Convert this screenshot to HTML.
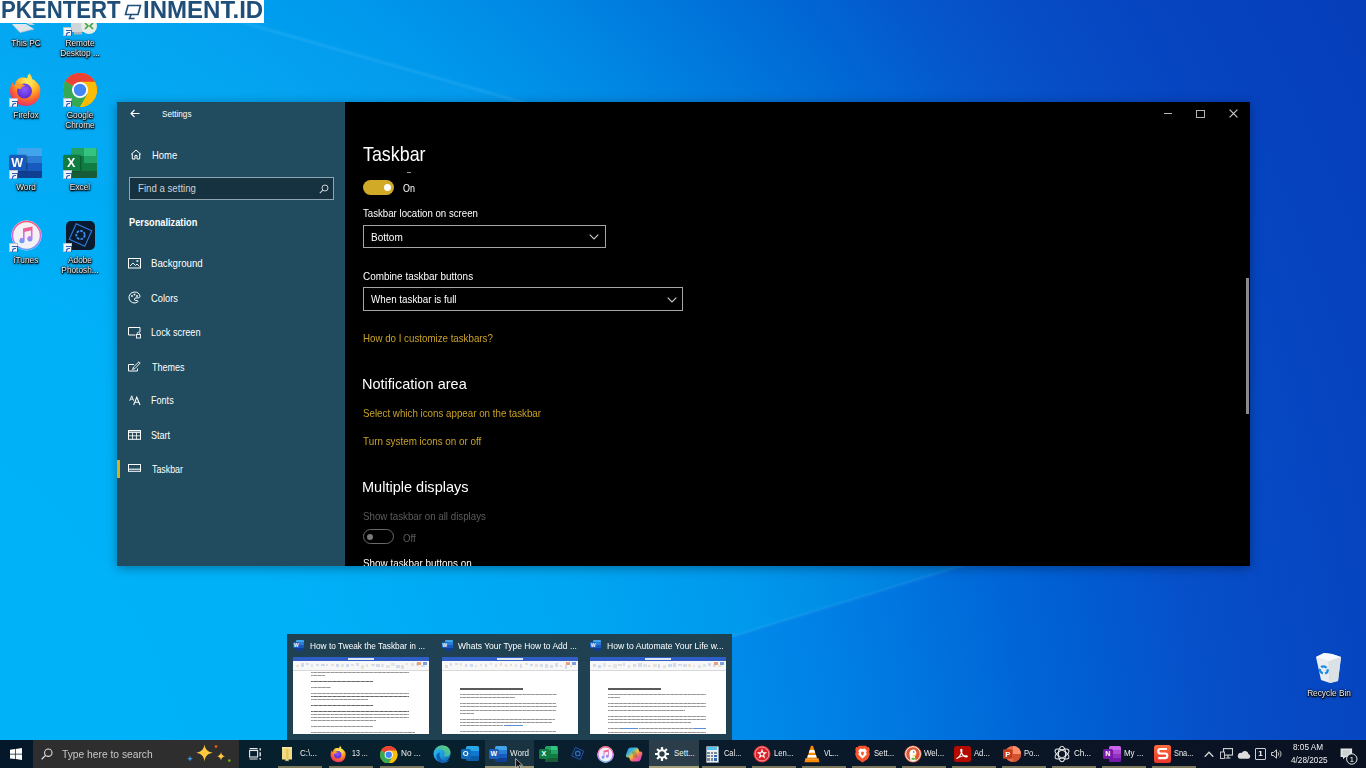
<!DOCTYPE html>
<html>
<head>
<meta charset="utf-8">
<title>Taskbar settings</title>
<style>
*{box-sizing:border-box;margin:0;padding:0}
html,body{width:1366px;height:768px;overflow:hidden}
body{position:relative;font-family:"Liberation Sans",sans-serif;color:#fff;
 background:#0078d7;}
.abs{position:absolute}
#root{position:absolute;left:-8px;top:-8px;width:1382px;height:784px;overflow:hidden;filter:blur(.55px)}
#stage{position:absolute;left:8px;top:8px;width:1366px;height:768px}
#bg{position:absolute;left:-8px;top:-8px;width:1382px;height:784px;
 background:radial-gradient(circle at -292px 868px,#00b5f9 0px,#00b1f8 626px,#00a5f1 927px,#00a0f0 982px,#0098ec 1082px,#0088e4 1195px,#0080e0 1240px,#0068d4 1382px,#0654ca 1503px,#064ac4 1600px,#0644c0 1686px,#063eba 1853px);}
#bg2{position:absolute;left:0;top:0;width:1366px;height:768px}

/* watermark */
#wm{left:0;top:0;width:264px;height:23px;background:#fff;color:#1f4e79;font-weight:bold;font-size:23px;line-height:23px;white-space:nowrap}

/* settings window */
#win{left:117px;top:102px;width:1133px;height:464px;background:#000;box-shadow:0 2px 10px rgba(0,0,0,.35);overflow:hidden}
#side{left:0;top:0;width:228px;height:464px;background:#214b5e}
.t{position:absolute;white-space:nowrap;line-height:1;transform-origin:0 50%}
.nav{font-size:10.5px;color:#fff}
.gold{color:#c9a227}
.lbl{font-size:10.5px}
.h2{font-size:15px}
.dd{position:absolute;border:1.200px solid #a6a6a6;background:#000;height:23.500px}

/* thumbnails */
#thumbs{left:287px;top:634px;width:445px;height:107px;background:#1f4152}
.th{position:absolute;top:23px;width:136px;height:76.500px;background:#fff;overflow:hidden}
.tt{position:absolute;top:6.700px;font-size:9px;white-space:nowrap;line-height:11px}

/* taskbar */
#tb{left:0;top:740px;width:1366px;height:28px;background:linear-gradient(90deg,#06202e 0,#08202e 500px,#0a1a2a 800px,#0a1424 1100px,#0a1222 1366px)}
.tbt{position:absolute;top:8px;font-size:9px;line-height:11px;white-space:nowrap;color:#f0f0f0}
.ul{position:absolute;top:26px;height:2px;background:#7c775a}
</style>
</head>
<body>
<div id="root"><div id="stage">
<div class="abs" style="left:-8px;top:-8px;width:280px;height:31px;background:#fff"></div>
<div id="bg"></div>
<svg id="bg2" width="1366" height="768" viewBox="0 0 1366 768"><defs><linearGradient id="wdg" gradientUnits="userSpaceOnUse" x1="600" y1="0" x2="1330" y2="0"><stop offset="0" stop-color="#001ed2" stop-opacity=".13"/><stop offset=".6" stop-color="#001ed2" stop-opacity=".13"/><stop offset="1" stop-color="#001ed2" stop-opacity="0"/></linearGradient><filter id="bl"><feGaussianBlur stdDeviation="1.2"/></filter></defs>
<path d="M0 -47L560 113" stroke="#8fd8ff" stroke-opacity=".16" stroke-width="2.500" filter="url(#bl)"/>
<path d="M0 -47L560 113L0 200z" fill="#7fd0ff" fill-opacity=".035"/>
<path d="M560 690L1160 505" stroke="#8fd0ff" stroke-opacity=".12" stroke-width="2.500" filter="url(#bl)"/>
<path d="M470 718L1160 505L1366 441V768H470z" fill="url(#wdg)"/>
</svg>

<!-- WATERMARK -->
<div id="wm" class="abs"><span id="wm1" style="position:absolute;left:.8px;top:-.7px;transform-origin:0 50%;transform:scaleX(.965)">PKENTERT</span><span id="wm2" style="position:absolute;left:142.500px;top:-.7px;transform-origin:0 50%;transform:scaleX(1.045)">INMENT.ID</span>
<svg style="position:absolute;left:124px;top:4px" width="18" height="16" viewBox="0 0 18 16"><path d="M4 1.5h12.5l-2.5 9H1.5z" fill="none" stroke="#1f4e79" stroke-width="1.6"/><path d="M7 11l-1.5 3.5h5" fill="none" stroke="#1f4e79" stroke-width="1.6"/></svg>
</div>

<!-- DESKTOP ICONS -->
<div id="icons">
<style>
.dl{position:absolute;font-size:9px;line-height:10.300px;color:#f2f2f2;text-align:center;width:60px;white-space:nowrap;text-shadow:0 0 1px #000,0 .8px 1.200px #000,.6px .8px 1.500px #000,0 0 2.500px rgba(0,0,0,.95),0 1px 3px rgba(0,0,0,.8);transform:scaleX(.92)}
.sc{position:absolute;width:9px;height:9px;background:#f1f4f7;border:.5px solid #b8c2cc}
.sc:after{content:"";position:absolute;left:2px;top:2px;width:4.500px;height:4.500px;border-top:1.600px solid #2a5db8;border-right:1.600px solid #2a5db8;border-top-right-radius:1px}
.sc:before{content:"";position:absolute;left:1.500px;top:4.200px;width:3px;height:3px;border-left:1.400px solid #2a5db8;border-top:1.400px solid #2a5db8;border-top-left-radius:3px}
</style>
<!-- This PC (cut off) -->
<svg class="abs" style="left:10px;top:23px" width="26" height="11" viewBox="0 0 26 11"><path d="M2 1l14 0 8 5-14 3.500z" fill="#dfe6ea"/><path d="M2 1l8 8.500L24 6" fill="none" stroke="#b9c4cb" stroke-width=".8"/><path d="M16 0l6-0 3 2-5 0z" fill="#c8d2d8"/></svg>
<div class="dl" style="left:-4.500px;top:37.500px">This PC</div>
<!-- Remote Desktop (cut off) -->
<svg class="abs" style="left:62px;top:23px" width="36" height="14" viewBox="0 0 36 14"><rect x="9" y="0" width="14" height="9" fill="#cfd6da"/><rect x="12" y="9" width="8" height="2.500" fill="#aab4ba"/><circle cx="27" cy="3" r="8" fill="#e8ece8"/><path d="M23 0l3 3-3 3M31 0l-3 3 3 3" stroke="#3da53d" stroke-width="1.600" fill="none"/></svg>
<div class="sc" style="left:63px;top:27px"></div>
<div class="dl" style="left:50px;top:37.500px">Remote<br>Desktop ...</div>

<!-- Firefox -->
<svg class="abs" style="left:9px;top:72px" width="34" height="35" viewBox="0 0 34 35">
 <defs><radialGradient id="ffg" cx="60%" cy="25%" r="85%"><stop offset="0" stop-color="#fff36b"/><stop offset=".35" stop-color="#ffbd2e"/><stop offset=".65" stop-color="#ff6a2a"/><stop offset="1" stop-color="#e31587"/></radialGradient>
 <radialGradient id="ffp" cx="50%" cy="40%" r="60%"><stop offset="0" stop-color="#9059ff"/><stop offset="1" stop-color="#5b2bd0"/></radialGradient></defs>
 <path d="M20 1c2 2 3 4 3 6 3 1 6 4 8 8 1 4 0 10-3 14-4 5-11 6-17 4C5 31 1 26 1 19c0-4 1-7 3-9 0 2 1 3 2 3 0-3 2-6 5-7 3-1 7 0 9 1z" fill="url(#ffg)"/>
 <circle cx="15.500" cy="19" r="7.500" fill="url(#ffp)"/>
 <path d="M5 14c3-3 8-3 11 0-2 0-4 1-4 3-3 0-5-1-7-3z" fill="#ff9a2e"/>
 <path d="M19 2c3 3 5 8 3 13-1-3-3-5-5-6 1-2 2-5 2-7z" fill="#ffe14a"/>
</svg>
<div class="sc" style="left:9px;top:98px"></div>
<div class="dl" style="left:-4.500px;top:110px">Firefox</div>

<!-- Chrome -->
<svg class="abs" style="left:62.500px;top:73px" width="34" height="34" viewBox="0 0 34 34">
 <circle cx="17" cy="17" r="17" fill="#fbbc05"/>
 <path d="M17 17L2.280 8.500A17 17 0 0 1 31.720 8.500z" fill="#ea4335"/>
 <path d="M17 17H34A17 17 0 0 0 31.720 8.500L17 8.500z" fill="#ea4335"/>
 <path d="M17 17L2.280 8.500A17 17 0 0 0 17 34L24.500 21z" fill="#34a853"/>
 <path d="M17 17l7.500 4L17 34A17 17 0 0 0 31.720 8.500H17z" fill="#fbbc05"/>
 <path d="M2.280 8.500A17 17 0 0 1 31.720 8.500H17z" fill="#ea4335"/>
 <circle cx="17" cy="17" r="8" fill="#fff"/><circle cx="17" cy="17" r="6.200" fill="#4285f4"/>
</svg>
<div class="sc" style="left:63px;top:98px"></div>
<div class="dl" style="left:50px;top:110px">Google<br>Chrome</div>

<!-- Word -->
<div class="abs" style="left:17px;top:148px;width:25px;height:30px;border-radius:1.500px;overflow:hidden">
 <div style="height:7.500px;background:#41a5ee"></div><div style="height:7.500px;background:#2b7cd3"></div><div style="height:7.500px;background:#185abd"></div><div style="height:7.500px;background:#103f91"></div></div>
<div class="abs" style="left:9px;top:154.500px;width:16.500px;height:16.500px;background:#185abd;border-radius:1.500px;box-shadow:1px 0 2px rgba(0,0,0,.35);color:#fff;font-weight:bold;font-size:12.500px;line-height:16.500px;text-align:center">W</div>
<div class="sc" style="left:9px;top:170px"></div>
<div class="dl" style="left:-4.500px;top:182px">Word</div>

<!-- Excel -->
<div class="abs" style="left:71px;top:148px;width:25.500px;height:30px;border-radius:1.500px;overflow:hidden;background:#21a366">
 <div class="abs" style="left:12.700px;top:0;width:12.800px;height:7.500px;background:#33c481"></div>
 <div class="abs" style="left:0;top:7.500px;width:12.700px;height:7.500px;background:#107c41"></div>
 <div class="abs" style="left:12.700px;top:7.500px;width:12.800px;height:7.500px;background:#21a366"></div>
 <div class="abs" style="left:0;top:15px;width:25.500px;height:7.500px;background:#107c41"></div>
 <div class="abs" style="left:0;top:22.500px;width:25.500px;height:7.500px;background:#185c37"></div></div>
<div class="abs" style="left:63px;top:154.500px;width:16.500px;height:16.500px;background:#107c41;border-radius:1.500px;box-shadow:1px 0 2px rgba(0,0,0,.35);color:#fff;font-weight:bold;font-size:12.500px;line-height:16.500px;text-align:center">X</div>
<div class="sc" style="left:63px;top:170px"></div>
<div class="dl" style="left:50px;top:182px">Excel</div>

<!-- iTunes -->
<svg class="abs" style="left:10.500px;top:219.500px" width="31" height="31" viewBox="0 0 31 31">
 <defs><linearGradient id="itg" x1="0" y1="0" x2="0" y2="1"><stop offset="0" stop-color="#fb5c74"/><stop offset=".55" stop-color="#d36ee8"/><stop offset="1" stop-color="#5aa6f8"/></linearGradient></defs>
 <circle cx="15.500" cy="15.500" r="15" fill="#f4f1f6"/><circle cx="15.500" cy="15.500" r="14" fill="none" stroke="url(#itg)" stroke-width="1.600"/>
 <path d="M12 8.500l9.500-2v12.300a2.600 2.600 0 1 1-1.600-2.400V10.500l-6.300 1.400v8.700a2.600 2.600 0 1 1-1.600-2.400z" fill="url(#itg)"/>
</svg>
<div class="sc" style="left:9px;top:243px"></div>
<div class="dl" style="left:-4.500px;top:254.500px">iTunes</div>

<!-- Photoshop Elements -->
<div class="abs" style="left:65.500px;top:221px;width:29px;height:28.500px;border-radius:5px;background:#0a1b30"></div>
<svg class="abs" style="left:65.500px;top:221px" width="29" height="29" viewBox="0 0 29 29"><rect x="6" y="5.500" width="17" height="17" fill="none" stroke="#2f7de0" stroke-width="1.100" transform="rotate(24 14.500 14)"/><circle cx="14.500" cy="14" r="4.200" fill="none" stroke="#3f95f5" stroke-width="1.800" stroke-dasharray="2.600 1.200"/></svg>
<div class="sc" style="left:63px;top:243px"></div>
<div class="dl" style="left:50px;top:254.500px">Adobe<br>Photosh...</div>

<!-- Recycle bin -->
<svg class="abs" style="left:1314px;top:651px" width="29" height="33" viewBox="0 0 29 33"><path d="M2 6l8-4 8 1 9 3-3 24-8 2-9-3z" fill="#e9edf0"/><path d="M2 6l13 4 12-4-9-3-8-1z" fill="#f8fafb"/><path d="M15 10l1 22" stroke="#c9d1d6" stroke-width=".8"/><path d="M15 10l12-4-3 24-8 2z" fill="#dbe1e5"/><circle cx="9.300" cy="17.800" r="3.700" fill="none" stroke="#1b8ae6" stroke-width="2.300" stroke-dasharray="5.600 2.150" transform="rotate(-20 9.300 17.800) skewY(8)"/></svg>
<div class="dl" style="left:1298.500px;top:688px">Recycle Bin</div>
</div>

<!-- SETTINGS WINDOW -->
<div id="win" class="abs">
 <div id="side" class="abs">
  <!-- back arrow -->
  <svg class="abs" style="left:12.800px;top:7.200px" width="10" height="9" viewBox="0 0 10 9"><path d="M9.5 4.5H1M4.5 1L1 4.5 4.5 8" fill="none" stroke="#fff" stroke-width="1.1"/></svg>
  <div class="t" id="s_settings" style="left:44.500px;top:7.300px;font-size:9.5px;transform:scaleX(0.859)">Settings</div>
  <!-- home -->
  <svg class="abs" style="left:12.500px;top:47px" width="12" height="11" viewBox="0 0 12 11"><path d="M1 5.5L6 1l5 4.500M2.300 4.800V10h2.700V6.500h2V10h2.700V4.800" fill="none" stroke="#fff" stroke-width="1"/></svg>
  <div class="t nav" id="s_home" style="left:35px;top:48px;font-size:11px;transform:scaleX(0.857)">Home</div>
  <!-- search -->
  <div class="abs" style="left:11.500px;top:74.700px;width:205.500px;height:23px;border:1px solid #8fa6b2;background:#163240"></div>
  <div class="t" id="s_find" style="left:21px;top:81px;font-size:10.5px;color:#c9d2d7;transform:scaleX(.92)">Find a setting</div>
  <svg class="abs" style="left:202px;top:82px" width="10" height="10" viewBox="0 0 10 10"><circle cx="6" cy="4" r="3" fill="none" stroke="#c9d2d7" stroke-width="1"/><path d="M3.800 6.200L.8 9.200" stroke="#c9d2d7" stroke-width="1.1"/></svg>
  <div class="t" id="s_pers" style="left:12px;top:115px;font-size:10.5px;font-weight:bold;transform:scaleX(.88)">Personalization</div>

  <!-- nav items -->
  <svg class="abs" style="left:10.700px;top:155.500px" width="13" height="11" viewBox="0 0 13 11"><rect x=".5" y=".5" width="12" height="9.500" fill="none" stroke="#fff"/><path d="M2 8l3-3 2.500 2.500L9 6l2.500 2.500" fill="none" stroke="#fff" stroke-width=".9"/><rect x="8.500" y="2.200" width="1.800" height="1.600" fill="#fff"/></svg>
  <div class="t nav" id="n1" style="left:34px;top:156px;transform:scaleX(0.923)">Background</div>

  <svg class="abs" style="left:10.700px;top:188.500px" width="13" height="13" viewBox="0 0 13 13"><path d="M6.500 1a5.500 5.500 0 1 0 3 10.100c.9-.6.300-1.600-.5-1.600H7.800a1.300 1.300 0 0 1 0-2.600h2.400c1 0 1.800-.7 1.800-1.700A5.500 5.500 0 0 0 6.500 1z" fill="none" stroke="#fff" stroke-width="1"/><circle cx="4" cy="5" r=".9" fill="#fff"/><circle cx="6.500" cy="3.500" r=".9" fill="#fff"/><circle cx="9" cy="5" r=".9" fill="#fff"/></svg>
  <div class="t nav" id="n2" style="left:34px;top:191px;transform:scaleX(0.887)">Colors</div>

  <svg class="abs" style="left:10.700px;top:224.500px" width="13" height="12" viewBox="0 0 13 12"><path d="M7.500 8H.5V.5h11.500V5" fill="none" stroke="#fff"/><rect x="8.500" y="7.500" width="4" height="3.500" fill="none" stroke="#fff" stroke-width=".9"/><path d="M9.300 7.500V6.300a1.200 1.200 0 0 1 2.400 0v1.200" fill="none" stroke="#fff" stroke-width=".9"/></svg>
  <div class="t nav" id="n3" style="left:34px;top:225px;transform:scaleX(0.875)">Lock screen</div>

  <svg class="abs" style="left:10.700px;top:258.800px" width="13" height="12" viewBox="0 0 13 12"><path d="M6 3.500H.5V10h9V7.500" fill="none" stroke="#fff"/><path d="M4.500 8.500l1-2.500L11 .8l1.200 1.200L7 7.500z" fill="none" stroke="#fff" stroke-width=".9"/></svg>
  <div class="t nav" id="n4" style="left:35px;top:260px;transform:scaleX(0.858)">Themes</div>

  <svg class="abs" style="left:11.500px;top:293px" width="12" height="11" viewBox="0 0 12 11"><path d="M.7 5.800L2.700.8l2 5M1.400 4.100h2.600" fill="none" stroke="#fff" stroke-width=".9"/><path d="M4.600 10L7.800 2.200 11 10M5.800 7.300h4" fill="none" stroke="#fff" stroke-width="1.050"/></svg>
  <div class="t nav" id="n5" style="left:34px;top:293px;transform:scaleX(0.863)">Fonts</div>

  <svg class="abs" style="left:10.700px;top:327.500px" width="13" height="11" viewBox="0 0 13 11"><rect x=".5" y=".5" width="12" height="8.800" fill="none" stroke="#fff"/><path d="M.5 2.200h12" stroke="#fff" stroke-width="1.300"/><path d="M.5 5.800h12M4.500 2.500v6.800M8.500 2.500v6.800" stroke="#fff" stroke-width=".8"/></svg>
  <div class="t nav" id="n6" style="left:34px;top:328px;transform:scaleX(0.861)">Start</div>

  <div class="abs" style="left:0;top:357.500px;width:3px;height:18px;background:#d4b021"></div>
  <svg class="abs" style="left:10.700px;top:361.500px" width="13" height="9" viewBox="0 0 13 9"><rect x=".5" y=".5" width="12" height="6.800" fill="none" stroke="#fff"/><path d="M.5 5.200h12" stroke="#fff" stroke-width="1.100"/></svg>
  <div class="t nav" id="n7" style="left:35px;top:362px;transform:scaleX(0.841)">Taskbar</div>
 </div>
 <div id="content">
  <!-- window controls -->
  <div class="abs" style="left:1047px;top:11px;width:7.500px;height:1.400px;background:#b8b8b8"></div>
  <div class="abs" style="left:1079px;top:7.500px;width:9px;height:8.500px;border:1.300px solid #b4b4b4"></div>
  <svg class="abs" style="left:1112px;top:7px" width="9" height="9" viewBox="0 0 9 9"><path d="M.6.6l7.800 7.800M8.400.6L.6 8.400" stroke="#c8c8c8" stroke-width="1.200"/></svg>
  <!-- scrollbar -->
  <div class="abs" style="left:1129px;top:176px;width:3px;height:136px;background:#8a8a8a"></div>

  <div class="t" id="c_title" style="left:246px;top:41px;font-size:21px;transform:scaleX(.85)">Taskbar</div>
  <div class="abs" style="left:290px;top:69.500px;width:4px;height:1.200px;background:#999"></div>

  <!-- toggle on -->
  <div class="abs" style="left:246px;top:78px;width:31px;height:15px;border-radius:8px;background:#d1aa28"></div>
  <div class="abs" style="left:266.500px;top:82px;width:7px;height:7px;border-radius:4px;background:#fff"></div>
  <div class="t lbl" id="c_on" style="left:286px;top:81.200px;transform:scaleX(0.85)">On</div>

  <div class="t lbl" id="c_l1" style="left:246px;top:106px;transform:scaleX(0.92)">Taskbar location on screen</div>
  <div class="dd" style="left:246px;top:122.800px;width:243px"></div>
  <div class="t lbl" id="c_d1" style="left:254px;top:130px;transform:scaleX(0.955)">Bottom</div>
  <svg class="abs" style="left:472px;top:132px" width="10" height="6" viewBox="0 0 10 6"><path d="M.7.700L5 5l4.300-4.300" fill="none" stroke="#ccc" stroke-width="1.100"/></svg>

  <div class="t lbl" id="c_l2" style="left:246px;top:168.500px;transform:scaleX(0.943)">Combine taskbar buttons</div>
  <div class="dd" style="left:246px;top:185.200px;width:320px"></div>
  <div class="t lbl" id="c_d2" style="left:254px;top:192px;transform:scaleX(0.933)">When taskbar is full</div>
  <svg class="abs" style="left:549.500px;top:194.500px" width="10" height="6" viewBox="0 0 10 6"><path d="M.7.700L5 5l4.300-4.300" fill="none" stroke="#ccc" stroke-width="1.100"/></svg>

  <div class="t lbl gold" id="c_k1" style="left:246px;top:230.500px;transform:scaleX(0.927)">How do I customize taskbars?</div>

  <div class="t h2" id="c_h1" style="left:245px;top:274px;transform:scaleX(.966)">Notification area</div>
  <div class="t lbl gold" id="c_k2" style="left:246px;top:305.500px;transform:scaleX(0.93)">Select which icons appear on the taskbar</div>
  <div class="t lbl gold" id="c_k3" style="left:246px;top:333.500px;transform:scaleX(0.939)">Turn system icons on or off</div>

  <div class="t h2" id="c_h2" style="left:245px;top:377px;transform:scaleX(.968)">Multiple displays</div>
  <div class="t lbl" id="c_l3" style="left:246px;top:409px;color:#5c5c5c;transform:scaleX(0.928)">Show taskbar on all displays</div>
  <!-- toggle off -->
  <div class="abs" style="left:246px;top:427px;width:31px;height:15px;border-radius:8px;border:1.500px solid #6a6a6a"></div>
  <div class="abs" style="left:250px;top:431.500px;width:6px;height:6px;border-radius:3px;background:#7a7a7a"></div>
  <div class="t lbl" id="c_off" style="left:286px;top:431px;color:#5c5c5c;transform:scaleX(0.916)">Off</div>
  <div class="t lbl" id="c_l4" style="left:246px;top:455.500px;transform:scaleX(.94)">Show taskbar buttons on</div>
 </div>
</div>

<!-- THUMBNAILS -->
<div id="thumbs" class="abs"><div class="abs" style="left:9.4px;top:5.5px;width:8.0px;height:11.5px;border-radius:1px;overflow:hidden"><div style="height:25%;background:#41a5ee"></div><div style="height:25%;background:#2b7cd3"></div><div style="height:25%;background:#185abd"></div><div style="height:25%;background:#103f91"></div></div><div class="abs" style="left:6px;top:8.0px;width:6.4px;height:6.4px;background:#1b5ebe;border-radius:1px;color:#fff;font-weight:bold;font-size:5.2px;line-height:6.4px;text-align:center">W</div><div class="tt" id="tt1" style="left:22.500px;transform-origin:0 50%;transform:scaleX(0.923)">How to Tweak the Taskbar in ...</div><div class="abs" style="left:157.9px;top:5.5px;width:8.0px;height:11.5px;border-radius:1px;overflow:hidden"><div style="height:25%;background:#41a5ee"></div><div style="height:25%;background:#2b7cd3"></div><div style="height:25%;background:#185abd"></div><div style="height:25%;background:#103f91"></div></div><div class="abs" style="left:154.5px;top:8.0px;width:6.4px;height:6.4px;background:#1b5ebe;border-radius:1px;color:#fff;font-weight:bold;font-size:5.2px;line-height:6.4px;text-align:center">W</div><div class="tt" id="tt2" style="left:171px;transform-origin:0 50%;transform:scaleX(0.941)">Whats Your Type How to Add ...</div><div class="abs" style="left:306.4px;top:5.5px;width:8.0px;height:11.5px;border-radius:1px;overflow:hidden"><div style="height:25%;background:#41a5ee"></div><div style="height:25%;background:#2b7cd3"></div><div style="height:25%;background:#185abd"></div><div style="height:25%;background:#103f91"></div></div><div class="abs" style="left:303px;top:8.0px;width:6.4px;height:6.4px;background:#1b5ebe;border-radius:1px;color:#fff;font-weight:bold;font-size:5.2px;line-height:6.4px;text-align:center">W</div><div class="tt" id="tt3" style="left:320px;transform-origin:0 50%;transform:scaleX(0.956)">How to Automate Your Life w...</div><div class="th" style="left:6px"><div class="abs" style="left:0;top:0;width:137px;height:3.500px;background:#2f5fc6"></div><div class="abs" style="left:55px;top:.5px;width:26px;height:2.500px;background:#dfe6f3"></div><div class="abs" style="left:0;top:3.500px;width:137px;height:9.500px;background:#f8f8f8"></div><div class="abs" style="left:0;top:13px;width:137px;height:.8px;background:#d8d8d8"></div><div class="abs" style="left:3px;top:7.9px;width:2.8px;height:2.1px;background:#ebe2d4"></div><div class="abs" style="left:8px;top:6.2px;width:3.2px;height:3.8px;background:#cfdaee"></div><div class="abs" style="left:13px;top:6.1px;width:2.9px;height:2.1px;background:#d6deec"></div><div class="abs" style="left:18px;top:7.1px;width:2.1px;height:3.1px;background:#e2e4e8"></div><div class="abs" style="left:23px;top:7.3px;width:3.2px;height:2.1px;background:#d6deec"></div><div class="abs" style="left:28px;top:6.8px;width:4.0px;height:2.1px;background:#cfdaee"></div><div class="abs" style="left:33px;top:6.6px;width:2.3px;height:2.2px;background:#d6deec"></div><div class="abs" style="left:38px;top:7.1px;width:3.4px;height:2.2px;background:#ebe2d4"></div><div class="abs" style="left:43px;top:7.3px;width:2.7px;height:3.1px;background:#cfdaee"></div><div class="abs" style="left:48px;top:7.1px;width:3.2px;height:3.0px;background:#e2e4e8"></div><div class="abs" style="left:53px;top:6.9px;width:2.6px;height:3.2px;background:#cfdaee"></div><div class="abs" style="left:58px;top:6.7px;width:2.5px;height:2.4px;background:#dedede"></div><div class="abs" style="left:63px;top:6.2px;width:2.6px;height:3.0px;background:#d6deec"></div><div class="abs" style="left:68px;top:7.5px;width:2.6px;height:4.0px;background:#ebe2d4"></div><div class="abs" style="left:73px;top:7.0px;width:2.3px;height:2.7px;background:#e2e4e8"></div><div class="abs" style="left:78px;top:6.8px;width:3.9px;height:2.2px;background:#dedede"></div><div class="abs" style="left:83px;top:7.1px;width:3.8px;height:2.6px;background:#cfdaee"></div><div class="abs" style="left:88px;top:6.7px;width:3.0px;height:3.6px;background:#e4e4e4"></div><div class="abs" style="left:93px;top:7.7px;width:3.9px;height:2.9px;background:#e2e4e8"></div><div class="abs" style="left:98px;top:6.1px;width:3.5px;height:2.6px;background:#e4e4e4"></div><div class="abs" style="left:103px;top:8.0px;width:3.6px;height:2.6px;background:#cfdaee"></div><div class="abs" style="left:108px;top:7.8px;width:2.7px;height:3.9px;background:#dedede"></div><div class="abs" style="left:113px;top:6.3px;width:2.2px;height:2.1px;background:#ebe2d4"></div><div class="abs" style="left:118px;top:6.3px;width:2.5px;height:2.8px;background:#ebe2d4"></div><div class="abs" style="left:123px;top:6.2px;width:2.9px;height:3.1px;background:#dedede"></div><div class="abs" style="left:128px;top:7.6px;width:3.7px;height:2.6px;background:#d6deec"></div><div class="abs" style="left:124px;top:5px;width:4px;height:3px;background:#e8a27a"></div><div class="abs" style="left:130px;top:5px;width:4px;height:3px;background:#7aa0e0"></div><div class="abs" style="left:18.3px;top:15.4px;width:98.1px;height:1.1px;background:repeating-linear-gradient(90deg,#8e8e8e 0,#a8a8a8 1.700px,#c4c4c4 2.300px,#909090 3.100px,#9c9c9c 4.300px)"></div><div class="abs" style="left:18.3px;top:18.4px;width:13.5px;height:1.1px;background:repeating-linear-gradient(90deg,#8e8e8e 0,#a8a8a8 1.700px,#c4c4c4 2.300px,#909090 3.100px,#9c9c9c 4.300px)"></div><div class="abs" style="left:18.3px;top:24.4px;width:61.4px;height:1.1px;background:repeating-linear-gradient(90deg,#5c5c5c 0,#808080 1.900px,#a0a0a0 2.600px,#666 3.300px,#6e6e6e 4.700px)"></div><div class="abs" style="left:18.3px;top:29.6px;width:20.2px;height:1.1px;background:repeating-linear-gradient(90deg,#8e8e8e 0,#a8a8a8 1.700px,#c4c4c4 2.300px,#909090 3.100px,#9c9c9c 4.300px)"></div><div class="abs" style="left:18.3px;top:35.6px;width:98.1px;height:1.1px;background:repeating-linear-gradient(90deg,#8e8e8e 0,#a8a8a8 1.700px,#c4c4c4 2.300px,#909090 3.100px,#9c9c9c 4.300px)"></div><div class="abs" style="left:18.3px;top:38.6px;width:98.1px;height:1.1px;background:repeating-linear-gradient(90deg,#5c5c5c 0,#808080 1.900px,#a0a0a0 2.600px,#666 3.300px,#6e6e6e 4.700px)"></div><div class="abs" style="left:18.3px;top:41.9px;width:56.9px;height:1.1px;background:repeating-linear-gradient(90deg,#8e8e8e 0,#a8a8a8 1.700px,#c4c4c4 2.300px,#909090 3.100px,#9c9c9c 4.300px)"></div><div class="abs" style="left:18.3px;top:47.9px;width:61.4px;height:1.1px;background:repeating-linear-gradient(90deg,#5c5c5c 0,#808080 1.900px,#a0a0a0 2.600px,#666 3.300px,#6e6e6e 4.700px)"></div><div class="abs" style="left:18.3px;top:54.3px;width:98.1px;height:1.1px;background:repeating-linear-gradient(90deg,#5c5c5c 0,#808080 1.900px,#a0a0a0 2.600px,#666 3.300px,#6e6e6e 4.700px)"></div><div class="abs" style="left:18.3px;top:57.3px;width:98.1px;height:1.1px;background:repeating-linear-gradient(90deg,#8e8e8e 0,#a8a8a8 1.700px,#c4c4c4 2.300px,#909090 3.100px,#9c9c9c 4.300px)"></div><div class="abs" style="left:18.3px;top:60.3px;width:98.1px;height:1.1px;background:repeating-linear-gradient(90deg,#8e8e8e 0,#a8a8a8 1.700px,#c4c4c4 2.300px,#909090 3.100px,#9c9c9c 4.300px)"></div><div class="abs" style="left:18.3px;top:63.3px;width:65.1px;height:1.1px;background:repeating-linear-gradient(90deg,#8e8e8e 0,#a8a8a8 1.700px,#c4c4c4 2.300px,#909090 3.100px,#9c9c9c 4.300px)"></div><div class="abs" style="left:18.3px;top:69.3px;width:61.4px;height:1.1px;background:repeating-linear-gradient(90deg,#8e8e8e 0,#a8a8a8 1.700px,#c4c4c4 2.300px,#909090 3.100px,#9c9c9c 4.300px)"></div><div class="abs" style="left:18.3px;top:75.3px;width:104.0px;height:1.1px;background:repeating-linear-gradient(90deg,#8e8e8e 0,#a8a8a8 1.700px,#c4c4c4 2.300px,#909090 3.100px,#9c9c9c 4.300px)"></div></div><div class="th" style="left:154.5px"><div class="abs" style="left:0;top:0;width:137px;height:3.500px;background:#2f5fc6"></div><div class="abs" style="left:55px;top:.5px;width:26px;height:2.500px;background:#dfe6f3"></div><div class="abs" style="left:0;top:3.500px;width:137px;height:9.500px;background:#f8f8f8"></div><div class="abs" style="left:0;top:13px;width:137px;height:.8px;background:#d8d8d8"></div><div class="abs" style="left:3px;top:8.0px;width:3.4px;height:2.8px;background:#dedede"></div><div class="abs" style="left:8px;top:6.3px;width:2.4px;height:2.5px;background:#d6deec"></div><div class="abs" style="left:13px;top:6.0px;width:3.7px;height:2.4px;background:#d6deec"></div><div class="abs" style="left:18px;top:6.0px;width:2.8px;height:2.7px;background:#ebe2d4"></div><div class="abs" style="left:23px;top:6.6px;width:2.3px;height:3.7px;background:#cfdaee"></div><div class="abs" style="left:28px;top:7.3px;width:3.5px;height:2.9px;background:#cfdaee"></div><div class="abs" style="left:33px;top:7.6px;width:2.8px;height:2.8px;background:#e4e4e4"></div><div class="abs" style="left:38px;top:7.0px;width:2.8px;height:2.4px;background:#e2e4e8"></div><div class="abs" style="left:43px;top:6.9px;width:2.2px;height:3.2px;background:#d6deec"></div><div class="abs" style="left:48px;top:6.0px;width:2.3px;height:2.2px;background:#e2e4e8"></div><div class="abs" style="left:53px;top:7.2px;width:2.1px;height:2.4px;background:#ebe2d4"></div><div class="abs" style="left:58px;top:6.3px;width:2.5px;height:2.7px;background:#dedede"></div><div class="abs" style="left:63px;top:6.9px;width:2.2px;height:3.0px;background:#ebe2d4"></div><div class="abs" style="left:68px;top:7.0px;width:2.6px;height:2.3px;background:#dedede"></div><div class="abs" style="left:73px;top:6.7px;width:2.5px;height:3.7px;background:#e4e4e4"></div><div class="abs" style="left:78px;top:7.0px;width:2.4px;height:3.9px;background:#d6deec"></div><div class="abs" style="left:83px;top:6.3px;width:3.1px;height:2.1px;background:#ebe2d4"></div><div class="abs" style="left:88px;top:6.6px;width:3.3px;height:2.2px;background:#cfdaee"></div><div class="abs" style="left:93px;top:7.0px;width:3.8px;height:2.7px;background:#ebe2d4"></div><div class="abs" style="left:98px;top:7.1px;width:3.6px;height:2.7px;background:#d6deec"></div><div class="abs" style="left:103px;top:7.2px;width:3.6px;height:3.5px;background:#d6deec"></div><div class="abs" style="left:108px;top:7.6px;width:3.6px;height:3.5px;background:#d6deec"></div><div class="abs" style="left:113px;top:6.4px;width:3.0px;height:3.5px;background:#d6deec"></div><div class="abs" style="left:118px;top:7.6px;width:2.9px;height:2.4px;background:#e2e4e8"></div><div class="abs" style="left:123px;top:7.9px;width:2.9px;height:3.9px;background:#cfdaee"></div><div class="abs" style="left:128px;top:7.9px;width:2.7px;height:2.4px;background:#ebe2d4"></div><div class="abs" style="left:124px;top:5px;width:4px;height:3px;background:#e8a27a"></div><div class="abs" style="left:130px;top:5px;width:4px;height:3px;background:#7aa0e0"></div><div class="abs" style="left:18.3px;top:31.4px;width:62.9px;height:1.3px;background:#5a5a5a"></div><div class="abs" style="left:18.3px;top:37.4px;width:97.3px;height:1.1px;background:repeating-linear-gradient(90deg,#8e8e8e 0,#a8a8a8 1.700px,#c4c4c4 2.300px,#909090 3.100px,#9c9c9c 4.300px)"></div><div class="abs" style="left:18.3px;top:40.4px;width:55.1px;height:1.1px;background:repeating-linear-gradient(90deg,#8e8e8e 0,#a8a8a8 1.700px,#c4c4c4 2.300px,#909090 3.100px,#9c9c9c 4.300px)"></div><div class="abs" style="left:18.3px;top:46.4px;width:96.6px;height:1.1px;background:repeating-linear-gradient(90deg,#8e8e8e 0,#a8a8a8 1.700px,#c4c4c4 2.300px,#909090 3.100px,#9c9c9c 4.300px)"></div><div class="abs" style="left:18.3px;top:49.4px;width:97.6px;height:1.1px;background:repeating-linear-gradient(90deg,#8e8e8e 0,#a8a8a8 1.700px,#c4c4c4 2.300px,#909090 3.100px,#9c9c9c 4.300px)"></div><div class="abs" style="left:18.3px;top:52.8px;width:95.8px;height:1.1px;background:repeating-linear-gradient(90deg,#8e8e8e 0,#a8a8a8 1.700px,#c4c4c4 2.300px,#909090 3.100px,#9c9c9c 4.300px)"></div><div class="abs" style="left:18.3px;top:55.8px;width:14.2px;height:1.1px;background:repeating-linear-gradient(90deg,#8e8e8e 0,#a8a8a8 1.700px,#c4c4c4 2.300px,#909090 3.100px,#9c9c9c 4.300px)"></div><div class="abs" style="left:18.3px;top:61.8px;width:95.1px;height:1.1px;background:repeating-linear-gradient(90deg,#8e8e8e 0,#a8a8a8 1.700px,#c4c4c4 2.300px,#909090 3.100px,#9c9c9c 4.300px)"></div><div class="abs" style="left:18.3px;top:64.8px;width:92.1px;height:1.1px;background:repeating-linear-gradient(90deg,#8e8e8e 0,#a8a8a8 1.700px,#c4c4c4 2.300px,#909090 3.100px,#9c9c9c 4.300px)"></div><div class="abs" style="left:18.3px;top:68.3px;width:43.4px;height:1.1px;background:repeating-linear-gradient(90deg,#8e8e8e 0,#a8a8a8 1.700px,#c4c4c4 2.300px,#909090 3.100px,#9c9c9c 4.300px)"></div><div class="abs" style="left:62.4px;top:68.3px;width:18.7px;height:1.1px;background:#5a8fd8"></div><div class="abs" style="left:18.3px;top:74.3px;width:95.8px;height:1.1px;background:repeating-linear-gradient(90deg,#8e8e8e 0,#a8a8a8 1.700px,#c4c4c4 2.300px,#909090 3.100px,#9c9c9c 4.300px)"></div></div><div class="th" style="left:303px"><div class="abs" style="left:0;top:0;width:137px;height:3.500px;background:#2f5fc6"></div><div class="abs" style="left:55px;top:.5px;width:26px;height:2.500px;background:#dfe6f3"></div><div class="abs" style="left:0;top:3.500px;width:137px;height:9.500px;background:#f8f8f8"></div><div class="abs" style="left:0;top:13px;width:137px;height:.8px;background:#d8d8d8"></div><div class="abs" style="left:3px;top:6.9px;width:2.7px;height:3.0px;background:#d6deec"></div><div class="abs" style="left:8px;top:7.7px;width:3.0px;height:3.3px;background:#cfdaee"></div><div class="abs" style="left:13px;top:6.2px;width:3.3px;height:3.8px;background:#e4e4e4"></div><div class="abs" style="left:18px;top:7.5px;width:3.0px;height:2.4px;background:#e4e4e4"></div><div class="abs" style="left:23px;top:6.7px;width:3.6px;height:3.9px;background:#e4e4e4"></div><div class="abs" style="left:28px;top:6.9px;width:3.5px;height:2.2px;background:#dedede"></div><div class="abs" style="left:33px;top:6.3px;width:2.3px;height:2.3px;background:#d6deec"></div><div class="abs" style="left:38px;top:7.6px;width:2.3px;height:3.7px;background:#dedede"></div><div class="abs" style="left:43px;top:7.3px;width:2.7px;height:3.1px;background:#dedede"></div><div class="abs" style="left:48px;top:6.0px;width:3.6px;height:3.5px;background:#d6deec"></div><div class="abs" style="left:53px;top:7.1px;width:3.9px;height:2.9px;background:#e2e4e8"></div><div class="abs" style="left:58px;top:7.7px;width:2.4px;height:2.5px;background:#d6deec"></div><div class="abs" style="left:63px;top:7.0px;width:3.5px;height:2.7px;background:#ebe2d4"></div><div class="abs" style="left:68px;top:6.8px;width:2.3px;height:3.8px;background:#cfdaee"></div><div class="abs" style="left:73px;top:7.8px;width:3.3px;height:3.6px;background:#ebe2d4"></div><div class="abs" style="left:78px;top:6.8px;width:3.8px;height:3.0px;background:#cfdaee"></div><div class="abs" style="left:83px;top:6.3px;width:3.0px;height:3.7px;background:#cfdaee"></div><div class="abs" style="left:88px;top:7.2px;width:3.6px;height:2.3px;background:#d6deec"></div><div class="abs" style="left:93px;top:6.9px;width:3.5px;height:3.1px;background:#d6deec"></div><div class="abs" style="left:98px;top:7.4px;width:3.1px;height:3.0px;background:#ebe2d4"></div><div class="abs" style="left:103px;top:7.8px;width:2.1px;height:2.4px;background:#e2e4e8"></div><div class="abs" style="left:108px;top:7.5px;width:3.0px;height:3.1px;background:#e2e4e8"></div><div class="abs" style="left:113px;top:6.9px;width:3.2px;height:3.0px;background:#e2e4e8"></div><div class="abs" style="left:118px;top:6.4px;width:2.6px;height:3.0px;background:#cfdaee"></div><div class="abs" style="left:123px;top:7.0px;width:2.5px;height:3.0px;background:#dedede"></div><div class="abs" style="left:128px;top:7.8px;width:3.8px;height:2.4px;background:#ebe2d4"></div><div class="abs" style="left:124px;top:5px;width:4px;height:3px;background:#e8a27a"></div><div class="abs" style="left:130px;top:5px;width:4px;height:3px;background:#7aa0e0"></div><div class="abs" style="left:18.0px;top:31.4px;width:53.0px;height:1.3px;background:#5a5a5a"></div><div class="abs" style="left:18.0px;top:37.4px;width:98.4px;height:1.1px;background:repeating-linear-gradient(90deg,#8e8e8e 0,#a8a8a8 1.700px,#c4c4c4 2.300px,#909090 3.100px,#9c9c9c 4.300px)"></div><div class="abs" style="left:18.0px;top:40.4px;width:12.3px;height:1.1px;background:repeating-linear-gradient(90deg,#8e8e8e 0,#a8a8a8 1.700px,#c4c4c4 2.300px,#909090 3.100px,#9c9c9c 4.300px)"></div><div class="abs" style="left:18.0px;top:46.4px;width:98.4px;height:1.1px;background:repeating-linear-gradient(90deg,#8e8e8e 0,#a8a8a8 1.700px,#c4c4c4 2.300px,#909090 3.100px,#9c9c9c 4.300px)"></div><div class="abs" style="left:18.0px;top:49.4px;width:98.4px;height:1.1px;background:repeating-linear-gradient(90deg,#8e8e8e 0,#a8a8a8 1.700px,#c4c4c4 2.300px,#909090 3.100px,#9c9c9c 4.300px)"></div><div class="abs" style="left:18.0px;top:52.8px;width:76.6px;height:1.1px;background:repeating-linear-gradient(90deg,#8e8e8e 0,#a8a8a8 1.700px,#c4c4c4 2.300px,#909090 3.100px,#9c9c9c 4.300px)"></div><div class="abs" style="left:18.0px;top:58.8px;width:98.4px;height:1.1px;background:repeating-linear-gradient(90deg,#8e8e8e 0,#a8a8a8 1.700px,#c4c4c4 2.300px,#909090 3.100px,#9c9c9c 4.300px)"></div><div class="abs" style="left:18.0px;top:61.8px;width:98.4px;height:1.1px;background:repeating-linear-gradient(90deg,#8e8e8e 0,#a8a8a8 1.700px,#c4c4c4 2.300px,#909090 3.100px,#9c9c9c 4.300px)"></div><div class="abs" style="left:18.0px;top:64.8px;width:82.6px;height:1.1px;background:repeating-linear-gradient(90deg,#8e8e8e 0,#a8a8a8 1.700px,#c4c4c4 2.300px,#909090 3.100px,#9c9c9c 4.300px)"></div><div class="abs" style="left:18.0px;top:70.8px;width:13.0px;height:1.1px;background:repeating-linear-gradient(90deg,#8e8e8e 0,#a8a8a8 1.700px,#c4c4c4 2.300px,#909090 3.100px,#9c9c9c 4.300px)"></div><div class="abs" style="left:31.4px;top:70.8px;width:16.5px;height:1.1px;background:#5a8fd8"></div><div class="abs" style="left:48.5px;top:70.8px;width:55.1px;height:1.1px;background:repeating-linear-gradient(90deg,#8e8e8e 0,#a8a8a8 1.700px,#c4c4c4 2.300px,#909090 3.100px,#9c9c9c 4.300px)"></div><div class="abs" style="left:103.9px;top:70.8px;width:12.4px;height:1.1px;background:#5a8fd8"></div><div class="abs" style="left:18.0px;top:74.6px;width:98.4px;height:1.1px;background:repeating-linear-gradient(90deg,#8e8e8e 0,#a8a8a8 1.700px,#c4c4c4 2.300px,#909090 3.100px,#9c9c9c 4.300px)"></div></div></div>

<!-- TASKBAR -->
<div class="abs" style="left:-8px;top:740px;width:1382px;height:36px;background:linear-gradient(90deg,#06202e 0,#08202e 508px,#0a1a2a 808px,#0a1424 1108px,#0a1222 1382px)"></div>
<div class="abs" style="left:-8px;top:740px;width:41px;height:36px;background:#04182a"></div><div class="abs" style="left:33px;top:740px;width:206px;height:36px;background:#2e2e2e"></div>
<div id="tb" class="abs"><div class="abs" style="left:0;top:0;width:33px;height:28px;background:#04182a"></div><svg class="abs" style="left:10px;top:8px" width="12" height="12" viewBox="0 0 12 12"><path d="M0 1.700L5 1v4.700H0zM5.700.9L12 0v5.700H5.700zM0 6.400h5v4.700l-5-.7zM5.700 6.400H12V12l-6.300-.9z" fill="#fff"/></svg><div class="abs" style="left:33px;top:0;width:206px;height:28px;background:#2e2e2e"></div><svg class="abs" style="left:41px;top:8px" width="12" height="12" viewBox="0 0 12 12"><circle cx="7.300" cy="4.700" r="3.700" fill="none" stroke="#ddd" stroke-width="1.100"/><path d="M4.600 7.400L.7 11.300" stroke="#ddd" stroke-width="1.300"/></svg><div class="t" id="tb_search" style="left:62px;top:8.500px;font-size:11.500px;color:#c8c8c8;transform:scaleX(0.892)">Type here to search</div><svg class="abs" style="left:187px;top:3px" width="46" height="22" viewBox="0 0 46 22"><path d="M17.500 1.500c.8 5 3 7.200 8.200 8.300-5.200 1.100-7.400 3.300-8.200 8.700-.8-5.400-3-7.600-8.200-8.700 5.200-1.100 7.400-3.300 8.200-8.300z" fill="#ffc83d"/><path d="M34 9c.4 2.500 1.500 3.600 4 4.200-2.500.6-3.600 1.700-4 4.300-.4-2.600-1.500-3.700-4-4.300 2.500-.6 3.600-1.700 4-4.200z" fill="#ffc83d"/><circle cx="29" cy="3.500" r="1.300" fill="#f7630c"/><path d="M3 13l.8 2 2 .8-2 .8-.8 2-.8-2-2-.8 2-.8z" fill="#3aa0f3"/><circle cx="42.300" cy="17.600" r="1.300" fill="#6bb700"/></svg><svg class="abs" style="left:249px;top:8px" width="13" height="12" viewBox="0 0 13 12"><rect x=".6" y="2.500" width="8" height="6.500" fill="none" stroke="#e8e8e8" stroke-width="1.100"/><path d="M.6.600h8M.6 11h8" stroke="#e8e8e8" stroke-width="1.100"/><path d="M11.200.3v2.200M11.200 4.200v4M11.200 10v1.800" stroke="#e8e8e8" stroke-width="1.400"/></svg><div class="ul" style="left:278px;width:44px;background:#7c775a"></div><svg class="abs" style="left:281px;top:6px" width="12" height="16" viewBox="0 0 12 16"><path d="M1 1h10v12.500H7.500V15.500L6 14.500 4.500 15.500V13.500H1z" fill="#f3dc85"/><path d="M5 1h2.500v12H5z" fill="#e6c95e"/><path d="M1 1h10v1.500H1z" fill="#f9e9a8"/></svg><div class="tbt" id="tl1" style="left:299.5px;transform-origin:0 50%;transform:scaleX(.9)">C:\...</div><div class="ul" style="left:329px;width:44px;background:#7c775a"></div><svg class="abs" style="left:330px;top:5px" width="17" height="18" viewBox="0 0 34 35"><path d="M20 1c2 2 3 4 3 6 3 1 6 4 8 8 1 4 0 10-3 14-4 5-11 6-17 4C5 31 1 26 1 19c0-4 1-7 3-9 0 2 1 3 2 3 0-3 2-6 5-7 3-1 7 0 9 1z" fill="url(#ffg)"/><circle cx="15.500" cy="19" r="7.500" fill="url(#ffp)"/><path d="M5 14c3-3 8-3 11 0-2 0-4 1-4 3-3 0-5-1-7-3z" fill="#ff9a2e"/><path d="M19 2c3 3 5 8 3 13-1-3-3-5-5-6 1-2 2-5 2-7z" fill="#ffe14a"/></svg><div class="tbt" id="tl2" style="left:351.5px;transform-origin:0 50%;transform:scaleX(0.78)">13 ...</div><div class="ul" style="left:379.5px;width:44px;background:#7c775a"></div><svg class="abs" style="left:380px;top:5.500px" width="17.500" height="17.500" viewBox="0 0 34 34"><circle cx="17" cy="17" r="17" fill="#fbbc05"/><path d="M17 17L2.280 8.500A17 17 0 0 0 17 34L24.500 21z" fill="#34a853"/><path d="M17 17l7.500 4L17 34A17 17 0 0 0 31.720 8.500H17z" fill="#fbbc05"/><path d="M2.280 8.500A17 17 0 0 1 31.720 8.500H17L9.600 12.700z" fill="#ea4335"/><circle cx="17" cy="17" r="8" fill="#fff"/><circle cx="17" cy="17" r="6.200" fill="#4285f4"/></svg><div class="tbt" id="tl3" style="left:400.5px;transform-origin:0 50%;transform:scaleX(0.916)">No ...</div><svg class="abs" style="left:432.500px;top:5px" width="18" height="18" viewBox="0 0 18 18"><defs><linearGradient id="edg" x1="0" y1="0" x2="1" y2="1"><stop offset="0" stop-color="#35c1f1"/><stop offset=".5" stop-color="#1b9de2"/><stop offset="1" stop-color="#0c59a4"/></linearGradient><linearGradient id="edg2" x1="0" y1="1" x2="1" y2="0"><stop offset="0" stop-color="#1b9de2"/><stop offset="1" stop-color="#6bd66b"/></linearGradient></defs><circle cx="9" cy="9" r="8.500" fill="url(#edg)"/><path d="M1 7.500C2 3 5.500.5 9.500.5c5 0 8 3.500 8 7 0 2.500-2 4.200-4.500 4.200-1.500 0-2.300-.6-2.300-1.300 0-.6.800-1 .8-2.400 0-2-2-3.500-4.500-3.500C4.500 4.500 2 5.500 1 7.500z" fill="url(#edg2)"/><path d="M6.500 9.500c0 4 3 6.500 6.500 6.500 1.500 0 3-.6 4-1.500-1.500 2.300-4.500 3.800-7.500 3.500-4-.5-6.500-4-6-7.500.5-2 2-3 3.500-3-.3.500-.5 1.200-.5 2z" fill="#0f5fae"/></svg><div class="abs" style="left:466px;top:6px;width:12.500px;height:15px;border-radius:1.500px;overflow:hidden"><div style="height:5px;background:#28a8ea"></div><div style="height:5px;background:#0f78d4"></div><div style="height:5px;background:#0a5ea8"></div></div><div class="abs" style="left:461px;top:9px;width:9.500px;height:9.500px;background:#0f6cbd;border-radius:1.500px;color:#fff;font-weight:bold;font-size:7.500px;line-height:9.500px;text-align:center">O</div><div class="abs" style="left:484.500px;top:0;width:49.500px;height:28px;background:#1a3340"></div><div class="ul" style="left:484.5px;width:49.5px;background:#9a9470"></div><div class="abs" style="left:495px;top:5.500px;width:12px;height:16px;border-radius:1.500px;overflow:hidden"><div style="height:4px;background:#41a5ee"></div><div style="height:4px;background:#2b7cd3"></div><div style="height:4px;background:#185abd"></div><div style="height:4px;background:#103f91"></div></div><div class="abs" style="left:489px;top:9px;width:9.500px;height:9.500px;background:#1b5ebe;border-radius:1.500px;color:#fff;font-weight:bold;font-size:7px;line-height:9.500px;text-align:center">W</div><div class="tbt" id="tl4" style="left:510px;transform-origin:0 50%;transform:scaleX(0.891)">Word</div><svg class="abs" style="left:515px;top:17.500px" width="9" height="11" viewBox="0 0 9 11"><path d="M.6.600v9.400l2.300-2.200 1.600 3.200 1.500-.7-1.600-3.100h3.200z" fill="#111" stroke="#ddd" stroke-width=".7"/></svg><div class="abs" style="left:545px;top:5.500px;width:12.500px;height:16px;border-radius:1.500px;overflow:hidden;background:#21a366"><div class="abs" style="left:6.200px;top:0;width:6.300px;height:4px;background:#33c481"></div><div class="abs" style="left:0;top:4px;width:6.200px;height:4px;background:#107c41"></div><div class="abs" style="left:0;top:8px;width:12.500px;height:4px;background:#107c41"></div><div class="abs" style="left:0;top:12px;width:12.500px;height:4px;background:#185c37"></div></div><div class="abs" style="left:539px;top:9px;width:9.500px;height:9.500px;background:#107c41;border-radius:1.500px;color:#fff;font-weight:bold;font-size:7px;line-height:9.500px;text-align:center">X</div><div class="abs" style="left:569.500px;top:6px;width:15.500px;height:15.500px;border-radius:3px;background:#0b1e34"></div><svg class="abs" style="left:569.500px;top:6px" width="15.500" height="15.500" viewBox="0 0 29 29"><rect x="6" y="5.500" width="17" height="17" fill="none" stroke="#1f58a4" stroke-width="1.600" transform="rotate(24 14.500 14)"/><circle cx="14.500" cy="14" r="4.200" fill="none" stroke="#2a6cc0" stroke-width="2.400"/></svg><svg class="abs" style="left:597px;top:5.500px" width="17" height="17" viewBox="0 0 31 31"><circle cx="15.500" cy="15.500" r="15" fill="#f4f1f6"/><circle cx="15.500" cy="15.500" r="13.800" fill="none" stroke="url(#itg)" stroke-width="2.200"/><path d="M12 8.500l9.500-2v12.300a2.600 2.600 0 1 1-1.600-2.400V10.500l-6.300 1.400v8.700a2.600 2.600 0 1 1-1.600-2.400z" fill="url(#itg)"/></svg><svg class="abs" style="left:625px;top:5.500px" width="18" height="17" viewBox="0 0 18 17"><defs><linearGradient id="cpg" x1="0" y1="0" x2="1" y2="1"><stop offset="0" stop-color="#2486ee"/><stop offset=".28" stop-color="#35b6d8"/><stop offset=".48" stop-color="#f3c43a"/><stop offset=".66" stop-color="#f26a6a"/><stop offset=".82" stop-color="#e24fb0"/><stop offset="1" stop-color="#9a4bea"/></linearGradient></defs><path d="M6 1.500h5c1.500 0 2.300.8 2.700 2l.6 2h1.200c1.500 0 2.300 1.400 1.800 2.800l-1.600 5c-.5 1.400-1.500 2.200-3 2.200H7.500c-1.500 0-2.300-.8-2.700-2l-.6-2H2.800C1.300 11.500.5 10.100 1 8.700l1.800-5C3.300 2.300 4.500 1.500 6 1.500z" fill="url(#cpg)"/><path d="M7 5.500h4.200l1.300 6H8.300z" fill="#1b2a4a" opacity=".25"/></svg><div class="abs" style="left:649px;top:0;width:50px;height:28px;background:#2a3d49"></div><div class="ul" style="left:649px;width:50px;background:#a49e78"></div><svg class="abs" style="left:655px;top:7px" width="14" height="14" viewBox="0 0 14 14"><g fill="#fff"><circle cx="7" cy="7" r="4.700"/><g><rect x="5.900" y="0" width="2.200" height="14" rx=".4"/><rect x="5.900" y="0" width="2.200" height="14" rx=".4" transform="rotate(45 7 7)"/><rect x="5.900" y="0" width="2.200" height="14" rx=".4" transform="rotate(90 7 7)"/><rect x="5.900" y="0" width="2.200" height="14" rx=".4" transform="rotate(135 7 7)"/></g></g><circle cx="7" cy="7" r="2.700" fill="#2a3d49"/></svg><div class="tbt" id="tl5" style="left:673.5px;transform-origin:0 50%;transform:scaleX(0.883)">Sett...</div><div class="ul" style="left:702px;width:44px;background:#7c775a"></div><div class="abs" style="left:705.500px;top:5.500px;width:13px;height:17px;border-radius:1px;background:#e9eef2;border:.6px solid #8e9aa4"></div><div class="abs" style="left:707px;top:7px;width:10px;height:3px;background:#55c3ee"></div><div class="abs" style="left:707.0px;top:11.5px;width:2.800px;height:2.600px;background:#7c8791"></div><div class="abs" style="left:710.5px;top:11.5px;width:2.800px;height:2.600px;background:#7c8791"></div><div class="abs" style="left:714.0px;top:11.5px;width:2.800px;height:2.600px;background:#7c8791"></div><div class="abs" style="left:707.0px;top:14.9px;width:2.800px;height:2.600px;background:#7c8791"></div><div class="abs" style="left:710.5px;top:14.9px;width:2.800px;height:2.600px;background:#7c8791"></div><div class="abs" style="left:714.0px;top:14.9px;width:2.800px;height:2.600px;background:#2f68b8"></div><div class="abs" style="left:707.0px;top:18.3px;width:2.800px;height:2.600px;background:#7c8791"></div><div class="abs" style="left:710.5px;top:18.3px;width:2.800px;height:2.600px;background:#7c8791"></div><div class="abs" style="left:714.0px;top:18.3px;width:2.800px;height:2.600px;background:#2f68b8"></div><div class="tbt" id="tl6" style="left:723.5px;transform-origin:0 50%;transform:scaleX(0.824)">Cal...</div><div class="ul" style="left:752px;width:44px;background:#7c775a"></div><svg class="abs" style="left:753px;top:5px" width="18" height="18" viewBox="0 0 18 18"><circle cx="9" cy="9" r="8.600" fill="#d8232a"/><circle cx="9" cy="9" r="7" fill="none" stroke="#f7b9bb" stroke-width=".9"/><path d="M9 3.500l1.300 3.700 3.900.1-3.100 2.400 1.100 3.800L9 11.200l-3.200 2.300 1.100-3.800-3.100-2.400 3.900-.1z" fill="#fff"/><circle cx="9" cy="9" r="1.500" fill="#d8232a"/></svg><div class="tbt" id="tl7" style="left:774px;transform-origin:0 50%;transform:scaleX(0.859)">Len...</div><div class="ul" style="left:802px;width:44px;background:#7c775a"></div><svg class="abs" style="left:804px;top:5px" width="16" height="18" viewBox="0 0 16 18"><path d="M8 .8c.8 0 1.200.5 1.400 1.100L13 13.500H3L6.600 1.900C6.800 1.300 7.200.8 8 .8z" fill="#ff8a00"/><path d="M5.700 5h4.600l.9 2.800H4.800zM4 10h8l.8 2.600H3.200z" fill="#fff"/><path d="M1.500 13.500h13l1 3.700H.5z" fill="#ff8a00"/><path d="M1.500 13.500h13l.3 1H1.200z" fill="#ffb04d"/></svg><div class="tbt" id="tl8" style="left:823.5px;transform-origin:0 50%;transform:scaleX(0.797)">VL...</div><div class="ul" style="left:852px;width:44px;background:#7c775a"></div><svg class="abs" style="left:854.500px;top:5px" width="15" height="18" viewBox="0 0 15 18"><path d="M4 .8h7l1.300 1.500 1.500-.3 1 2.500-.6 1.500.6 3.500-2 4.500L7.500 17.500 2.200 14l-2-4.500.6-3.500L.2 4.500l1-2.500 1.500.3z" fill="#fb542b"/><path d="M7.500 4l2.300-.5 2 2.500-.8 1.500.8 1.800-2.300 2.500L7.500 13.500 5.500 11.800 3.200 9.300 4 7.500 3.200 6l2-2.500z" fill="#fff"/><path d="M7.500 6.500l1.500 1-.5 2.300-1 1-1-1L6 7.500z" fill="#fb542b"/></svg><div class="tbt" id="tl9" style="left:873.5px;transform-origin:0 50%;transform:scaleX(0.853)">Sett...</div><div class="ul" style="left:902px;width:44px;background:#7c775a"></div><svg class="abs" style="left:903.500px;top:5px" width="18" height="18" viewBox="0 0 18 18"><circle cx="9" cy="9" r="8.600" fill="#de5833"/><circle cx="9" cy="9" r="7.300" fill="none" stroke="#fff" stroke-width=".9"/><path d="M6.500 15.500c-.5-3-1.500-6-.8-8.500.5-1.800 2-2.700 3.800-2.500 1.800.2 2.800 1.500 2.800 3.300v1.500l-1.500.7.700 5.500c-1.500.7-3.500.7-5 0z" fill="#fdfdfd"/><path d="M8.500 10.500l3.500-.8v1.200l-3.300.6z" fill="#fdd20a"/><path d="M7.500 13c1-.5 2.500-.5 3.300 0l.2 1.500c-1 .6-2.500.6-3.500 0z" fill="#65bc46"/><circle cx="9.800" cy="7" r=".7" fill="#2d4f8e"/></svg><div class="tbt" id="tl10" style="left:923.5px;transform-origin:0 50%;transform:scaleX(0.881)">Wel...</div><div class="ul" style="left:952px;width:44px;background:#7c775a"></div><div class="abs" style="left:954px;top:5.500px;width:16.500px;height:16.500px;border-radius:2.500px;background:#b30b00"></div><svg class="abs" style="left:954px;top:5.500px" width="16.500" height="16.500" viewBox="0 0 16.500 16.500"><path d="M3 12.500c1.500-.5 4-4 4.700-6.500.4-1.500.2-2.800-.4-2.800-.8 0-.7 1.800.3 3.800 1 2 3 3.800 4.700 4 1.200.1 1.400-.8.300-1.100-1.700-.4-5 .1-7.700 1.300-1.500.7-2.700 1.500-1.900 1.300z" fill="none" stroke="#fff" stroke-width="1.100"/></svg><div class="tbt" id="tl11" style="left:974px;transform-origin:0 50%;transform:scaleX(0.852)">Ad...</div><div class="ul" style="left:1002px;width:44px;background:#7c775a"></div><svg class="abs" style="left:1002.500px;top:5px" width="18" height="18" viewBox="0 0 18 18"><circle cx="10" cy="9" r="8" fill="#ed6c47"/><path d="M10 1a8 8 0 0 1 8 8h-8z" fill="#ff8f6b"/><path d="M10 17a8 8 0 0 0 8-8h-8z" fill="#d35230"/><rect x="0" y="4.200" width="9.600" height="9.600" rx="1.200" fill="#c43e1c"/><text x="4.800" y="11.700" font-family="Liberation Sans" font-weight="bold" font-size="7.500" fill="#fff" text-anchor="middle">P</text></svg><div class="tbt" id="tl12" style="left:1023.5px;transform-origin:0 50%;transform:scaleX(.85)">Po...</div><div class="ul" style="left:1052px;width:44px;background:#7c775a"></div><svg class="abs" style="left:1053px;top:5px" width="18" height="18" viewBox="0 0 18 18"><g fill="none" stroke="#e6e6e6" stroke-width="1.100"><ellipse cx="9" cy="9" rx="3.600" ry="7.800"/><ellipse cx="9" cy="9" rx="3.600" ry="7.800" transform="rotate(60 9 9)"/><ellipse cx="9" cy="9" rx="3.600" ry="7.800" transform="rotate(120 9 9)"/></g></svg><div class="tbt" id="tl13" style="left:1073.5px;transform-origin:0 50%;transform:scaleX(.9)">Ch...</div><div class="ul" style="left:1102px;width:44px;background:#7c775a"></div><div class="abs" style="left:1109px;top:5.500px;width:12px;height:16px;border-radius:1.500px;overflow:hidden"><div style="height:4px;background:#ca64ea"></div><div style="height:4px;background:#ae4bd5"></div><div style="height:4px;background:#9332bf"></div><div style="height:4px;background:#7719aa"></div></div><div class="abs" style="left:1103px;top:9px;width:9.500px;height:9.500px;background:#7719aa;border-radius:1.500px;color:#fff;font-weight:bold;font-size:7px;line-height:9.500px;text-align:center">N</div><div class="tbt" id="tl14" style="left:1123.5px;transform-origin:0 50%;transform:scaleX(0.881)">My ...</div><div class="ul" style="left:1152px;width:44px;background:#7c775a"></div><div class="abs" style="left:1153.500px;top:5px;width:17.500px;height:17.500px;border-radius:2.500px;background:linear-gradient(180deg,#ff6a3d,#e8362c)"></div><svg class="abs" style="left:1153.500px;top:5px" width="17.500" height="17.500" viewBox="0 0 17.500 17.500"><path d="M13 4H6.500a2.200 2.200 0 0 0 0 4.500H11a2.300 2.300 0 0 1 0 4.600H4.300" fill="none" stroke="#fff" stroke-width="2.200"/></svg><div class="tbt" id="tl15" style="left:1173.5px;transform-origin:0 50%;transform:scaleX(0.824)">Sna...</div><svg class="abs" style="left:1204px;top:10.500px" width="10" height="6.500" viewBox="0 0 10 6.500"><path d="M.7 5.800L5 1.300l4.300 4.500" fill="none" stroke="#d4d4d4" stroke-width="1.300"/></svg><svg class="abs" style="left:1220px;top:8px" width="13" height="12" viewBox="0 0 13 12"><rect x="3.500" y=".6" width="9" height="6.500" fill="none" stroke="#d4d4d4" stroke-width="1.100"/><path d="M8 7v2.500M5.500 10h5" stroke="#d4d4d4" stroke-width="1.100"/><rect x=".5" y="4" width="4" height="6.500" fill="#0b1522" stroke="#d4d4d4" stroke-width=".9"/></svg><svg class="abs" style="left:1237px;top:9.500px" width="13.500" height="9" viewBox="0 0 13.500 9"><path d="M3 8.800h8a2.400 2.400 0 0 0 .5-4.700A3.600 3.600 0 0 0 4.700 3 3 3 0 0 0 3 8.800z" fill="#dcdcdc"/></svg><div class="abs" style="left:1255px;top:8px;width:11px;height:12px;border:1.200px solid #d0d0d0;border-radius:1px;color:#fff;font-size:8px;line-height:9.500px;text-align:center;font-weight:bold">1</div><svg class="abs" style="left:1271px;top:9px" width="11" height="10" viewBox="0 0 11 10"><path d="M.6 3.500h2L5.500.8v8.400L2.600 6.500h-2z" fill="none" stroke="#d4d4d4" stroke-width="1"/><path d="M7 3.200a2.500 2.500 0 0 1 0 3.600M8.600 1.700a4.600 4.600 0 0 1 0 6.600" fill="none" stroke="#d4d4d4" stroke-width=".9"/></svg><div class="tbt" id="tb_time" style="left:1293px;top:1.800px;font-size:8.500px;transform-origin:0 50%;transform:scaleX(0.963)">8:05 AM</div><div class="tbt" id="tb_date" style="left:1290.500px;top:14.500px;font-size:8.500px;transform-origin:0 50%;transform:scaleX(0.967)">4/28/2025</div><svg class="abs" style="left:1340px;top:8px" width="18" height="17" viewBox="0 0 18 17"><path d="M.6.600h11.500v8.500H5.500L3 11.200V9.100H.6z" fill="#e6e6e6"/><path d="M2.500 3h7.500M2.500 5h7.500M2.500 7h5" stroke="#9aa" stroke-width=".7"/><circle cx="11.800" cy="11" r="5.200" fill="#0b1522" stroke="#e6e6e6" stroke-width="1"/><text x="11.800" y="13.700" font-family="Liberation Sans" font-size="7.500" fill="#fff" text-anchor="middle">1</text></svg></div>

</div></div>
</body>
</html>
